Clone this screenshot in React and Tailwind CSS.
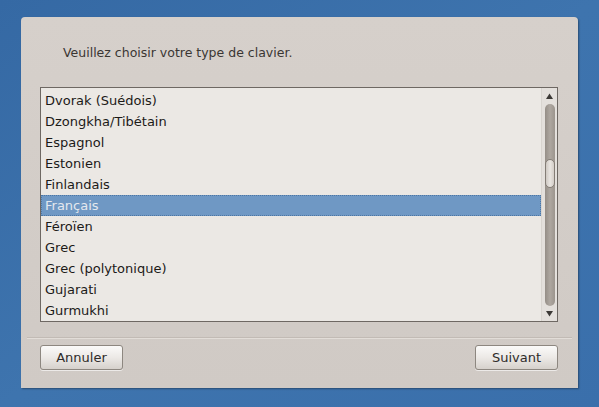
const layouts = [
  'Dvorak (Suédois)',
  'Dzongkha/Tibétain',
  'Espagnol',
  'Estonien',
  'Finlandais',
  'Français',
  'Féroïen',
  'Grec',
  'Grec (polytonique)',
  'Gujarati',
  'Gurmukhi',
]

const selected = 'Français'

const Button = ({ children }) => (
  <button
    type="button"
    className="h-[25px] w-[83px] rounded-[3px] border border-[#8d8780] bg-gradient-to-b from-[#fbfaf9] via-[#ece9e6] to-[#d6d1cc] text-[13px] text-[#2e2b29] shadow-[0_1px_0_rgba(255,255,255,0.6)]"
  >
    {children}
  </button>
)

const Scrollbar = () => (
  <div className="flex w-[16px] flex-col items-center border-l border-[#d9d5d0] bg-[#e4e0dc] py-[3px]">
    <svg width="9" height="7" viewBox="0 0 9 7" className="mt-[2px]">
      <path d="M4.5 0.5 L8 6 L1 6 Z" fill="#3c3936" />
    </svg>
    <div className="mt-[4px] flex w-[10px] flex-1 flex-col rounded-full bg-gradient-to-r from-[#958e87] via-[#aea7a0] to-[#9c958e]">
      <div className="h-[55px]" />
      <div className="h-[29px] rounded-full border border-[#847d76] bg-gradient-to-r from-[#cfc9c3] via-[#e9e5e1] to-[#d3cdc7]" />
    </div>
    <svg width="9" height="7" viewBox="0 0 9 7" className="mt-[4px] mb-[1px]">
      <path d="M1 1 L8 1 L4.5 6.5 Z" fill="#3c3936" />
    </svg>
  </div>
)

export default function App() {
  return (
    <div
      className="flex h-[407px] w-[599px] items-start bg-gradient-to-br from-[#3569a4] via-[#3e74ae] to-[#3a6fab] pl-[21px] pt-[17px]"
      style={{ fontFamily: '"DejaVu Sans", sans-serif' }}
    >
      <div className="flex h-[371px] w-[557px] flex-col rounded-t-[4px] bg-gradient-to-b from-[#d6d0cb] to-[#d0cac5] shadow-[1px_1px_2px_rgba(0,0,0,0.35)]">
        <p className="ml-[42px] mt-[26px] text-[12.5px] leading-[20px] text-[#3a3633]">
          Veuillez choisir votre type de clavier.
        </p>
        <div className="ml-[19px] mt-[24px] flex h-[235px] w-[518px] border border-[#6e6863] bg-[#ebe8e4]">
          <ul className="flex-1 pt-[2px]">
            {layouts.map((name) => (
              <li
                key={name}
                className={
                  name === selected
                    ? 'h-[21px] border border-dotted border-[#4d76a3] bg-[#6f98c4] pl-[3px] text-[13px] leading-[19px] text-[#e4e8ee]'
                    : 'h-[21px] pl-[4px] text-[13px] leading-[21px] text-[#1c1a18]'
                }
              >
                {name}
              </li>
            ))}
          </ul>
          <Scrollbar />
        </div>
        <div className="mx-[6px] mt-[15px] h-px bg-[#c2bbb5] shadow-[0_1px_0_#e2ddd8]" />
        <div className="flex justify-between pl-[19px] pr-[20px] pt-[7px]">
          <Button>Annuler</Button>
          <Button>Suivant</Button>
        </div>
      </div>
    </div>
  )
}
